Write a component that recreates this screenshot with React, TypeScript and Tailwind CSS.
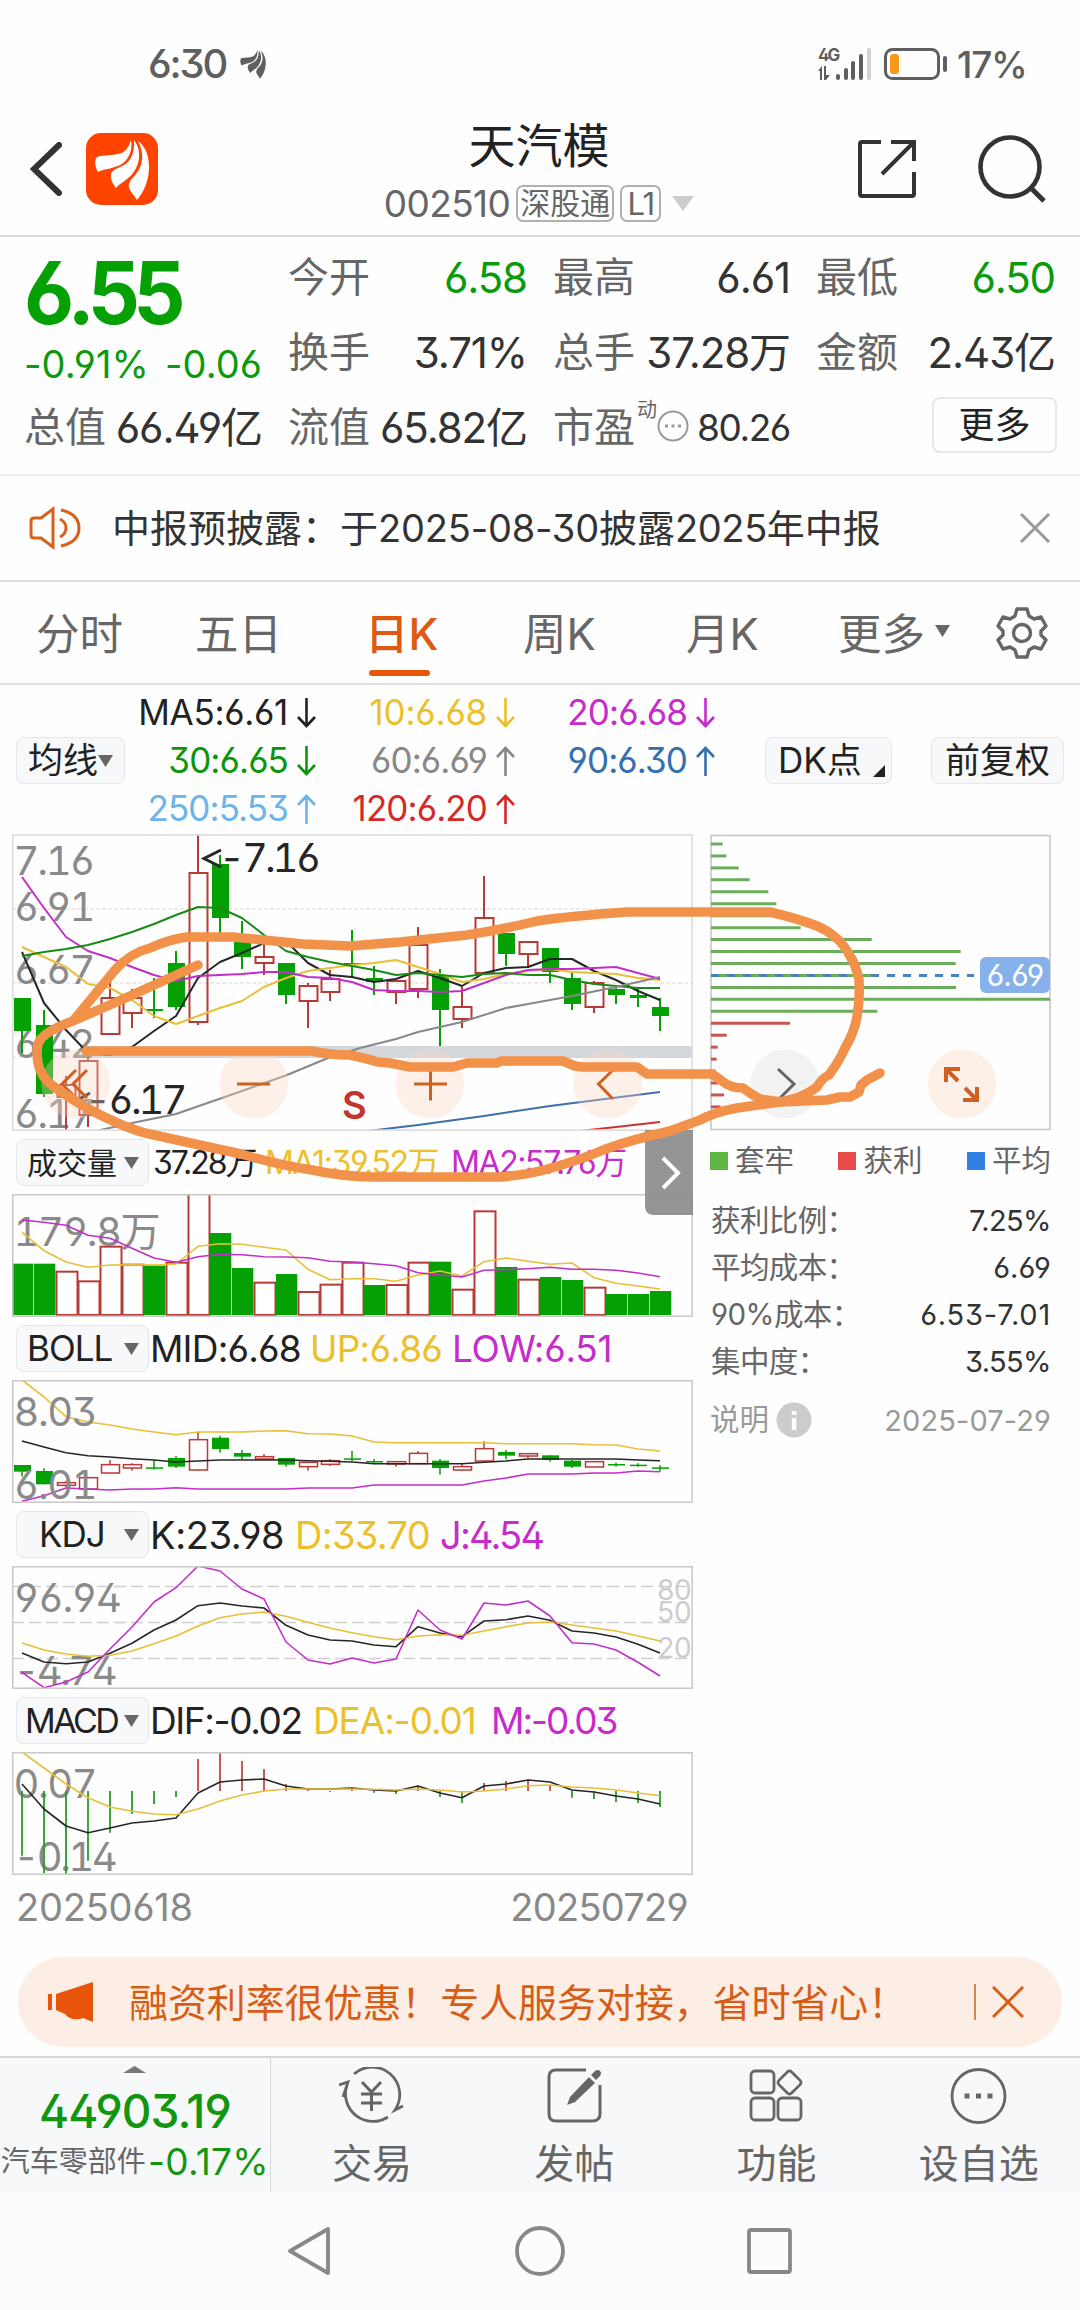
import type { ReactNode } from 'react';

type Candle = [up: number, top: number, bottom: number, high: number, low: number];

const RED = '#b83a36';
const GREEN = '#04a004';
const BLACK = '#262626';
const YELLOW = '#e8bf35';
const MAGENTA = '#c22fc8';

// Series values are stored at 3x density, relative to the base of each pane
const STEP = 22;
const px = (i: number) => 10 + STEP * i;
const toPoints = (values: number[], base: number) =>
  values.map((v, i) => `${px(i)},${((v - base) / 3).toFixed(1)}`).join(' ');

const mainCandles: Candle[] = [
  [0, 998, 1031, 998, 1053], [0, 1025, 1094, 1010, 1097], [1, 1085, 1097, 1076, 1130],
  [1, 1061, 1115, 1057, 1127], [1, 998, 1034, 980, 1034], [1, 998, 1013, 989, 1028],
  [0, 1009, 1011, 978, 1018], [0, 963, 1007, 951, 1010], [1, 873, 1022, 835, 1025],
  [0, 864, 918, 855, 933], [0, 942, 957, 921, 969], [1, 957, 963, 943, 975],
  [0, 963, 995, 963, 1004], [1, 986, 1001, 983, 1028], [1, 979, 992, 970, 1001],
  [0, 963, 965, 930, 977], [0, 978, 982, 966, 995], [1, 981, 992, 981, 1004],
  [1, 945, 989, 927, 998], [0, 976, 1010, 969, 1046], [1, 1007, 1019, 987, 1028],
  [1, 918, 973, 876, 973], [0, 933, 954, 933, 966], [1, 942, 954, 942, 968],
  [0, 948, 972, 948, 983], [0, 978, 1004, 973, 1010], [1, 983, 1007, 981, 1013],
  [0, 989, 995, 985, 1004], [0, 995, 998, 987, 1007], [0, 1007, 1016, 998, 1031],
];

const ma5 = [952, 1003, 1030, 1053, 1055, 1047, 1031, 1016, 978, 962, 953, 943, 941, 963, 975, 977, 982, 979, 971, 978, 986, 973, 968, 967, 959, 959, 971, 980, 991, 1000];
const ma10 = [947, 957, 967, 984, 988, 1000, 1016, 1024, 1016, 1008, 1001, 987, 978, 971, 968, 965, 963, 960, 967, 974, 982, 979, 974, 971, 969, 972, 973, 974, 978, 980];
const ma20 = [877, 908, 937, 951, 958, 967, 975, 981, 976, 975, 974, 972, 972, 977, 978, 982, 990, 991, 991, 992, 991, 983, 975, 970, 969, 969, 968, 967, 973, 979];
const ma30 = [956, 952, 949, 945, 939, 932, 924, 915, 907, 908, 918, 935, 951, 957, 962, 966, 970, 975, 973, 975, 977, 974, 973, 975, 975, 980, 984, 986, 988, 988];

const volumes: [number, number][] = [
  [0, 401], [0, 401], [1, 422], [1, 451], [1, 347], [1, 401], [0, 407], [1, 395], [1, 180], [0, 309],
  [0, 414], [1, 455], [0, 432], [1, 483], [1, 461], [1, 395], [0, 465], [1, 462], [1, 395], [0, 395],
  [1, 476], [1, 241], [0, 411], [1, 446], [0, 441], [0, 450], [1, 470], [0, 492], [0, 492], [0, 483],
];
const volMa1 = [307, 362, 396, 412, 405, 404, 405, 402, 349, 341, 343, 352, 360, 418, 449, 446, 446, 454, 435, 423, 438, 395, 384, 394, 403, 399, 443, 460, 468, 477];
const volMa2 = [270, 277, 286, 316, 325, 355, 384, 397, 380, 373, 374, 380, 381, 383, 394, 396, 401, 407, 428, 435, 441, 421, 419, 416, 412, 418, 418, 421, 429, 440];

const bollCandles: Candle[] = [
  [0, 1005, 1025, 1005, 1040], [0, 1023, 1063, 1015, 1063], [1, 1058, 1066, 1052, 1072], [1, 1043, 1077, 1043, 1077],
  [1, 1004, 1029, 990, 1029], [1, 1004, 1014, 1000, 1022], [0, 1012, 1015, 990, 1019], [0, 984, 1010, 978, 1014],
  [1, 929, 1020, 906, 1022], [0, 923, 957, 917, 968], [0, 969, 980, 960, 988], [1, 980, 987, 972, 990],
  [0, 984, 1004, 984, 1010], [1, 997, 1010, 997, 1022], [1, 992, 1003, 987, 1008], [0, 985, 988, 963, 993],
  [0, 993, 996, 987, 1002], [1, 995, 1002, 995, 1010], [1, 970, 1001, 963, 1001], [0, 992, 1014, 987, 1034],
  [1, 1010, 1020, 1000, 1022], [1, 956, 993, 934, 993], [0, 966, 977, 960, 988], [1, 971, 978, 971, 984],
  [0, 976, 990, 976, 995], [0, 992, 1010, 990, 1014], [1, 995, 1011, 995, 1011], [0, 1002, 1004, 998, 1010],
  [0, 1004, 1005, 1000, 1010], [0, 1012, 1016, 1006, 1025],
];
const bollUp = [750, 801, 860, 876, 885, 897, 906, 914, 906, 906, 906, 903, 902, 911, 912, 918, 936, 938, 938, 938, 938, 938, 941, 941, 941, 941, 944, 945, 957, 963];
const bollMid = [933, 951, 968, 977, 981, 986, 990, 996, 993, 990, 990, 990, 990, 992, 994, 996, 1001, 1001, 1001, 1001, 1001, 997, 993, 987, 987, 987, 987, 987, 990, 992];
const bollLow = [1114, 1097, 1074, 1077, 1080, 1077, 1077, 1073, 1077, 1077, 1077, 1077, 1077, 1074, 1074, 1074, 1065, 1065, 1065, 1065, 1065, 1053, 1044, 1032, 1032, 1032, 1029, 1029, 1023, 1025];

const kdjK = [459, 486, 491, 486, 460, 430, 390, 360, 317, 309, 318, 324, 376, 405, 420, 423, 435, 440, 380, 399, 410, 363, 359, 348, 361, 393, 399, 411, 433, 459];
const kdjD = [429, 450, 462, 469, 466, 453, 431, 408, 378, 353, 342, 336, 349, 367, 384, 398, 410, 419, 408, 404, 406, 393, 380, 369, 366, 375, 384, 393, 408, 423];
const kdjJ = [517, 563, 546, 516, 447, 381, 306, 263, 198, 213, 267, 297, 426, 480, 492, 474, 489, 477, 330, 390, 417, 309, 315, 303, 348, 428, 432, 450, 487, 528];

const macdBars = [1067, 1120, 1122, 1082, 998, 942, 912, 891, 777, 756, 783, 807, 852, 868, 876, 868, 878, 882, 860, 891, 909, 849, 843, 840, 857, 893, 897, 906, 909, 921];
const macdDif = [852, 927, 978, 998, 984, 969, 963, 954, 879, 846, 840, 837, 858, 867, 867, 864, 870, 873, 858, 879, 893, 858, 852, 840, 846, 870, 876, 888, 897, 912];
const macdDea = [756, 804, 852, 893, 921, 934, 942, 944, 927, 903, 885, 873, 867, 867, 867, 867, 868, 870, 867, 870, 876, 873, 867, 857, 855, 861, 864, 870, 879, 887];

// Right ends of the chip distribution lines
const chips = [68, 79, 116, 149, 205, 229, 262, 302, 515, 782, 767, 515, 768, 1050, 532, 270, 80, 53, 50, 47, 55, 72, 62];

const Line = ({ points, color, width = 1.6 }: { points: string; color: string; width?: number }) => (
  <polyline points={points} fill="none" stroke={color} strokeWidth={width} strokeLinejoin="round" />
);

const Candles = ({ data, y, stroke }: { data: Candle[]; y: (v: number) => number; stroke: number }) => (
  <>
    {data.map(([up, top, bottom, high, low], i) => {
      const x = px(i);
      const t = y(top);
      const h = Math.max(y(bottom) - t, 1.5);
      return up ? (
        <g key={i} stroke={RED} strokeWidth={stroke}>
          <path d={`M${x} ${y(high)}V${t}M${x} ${t + h}V${Math.max(y(low), t + h)}`} />
          <rect x={x - 8.5} y={t} width={18} height={h} fill="none" />
        </g>
      ) : (
        <g key={i} fill={GREEN}>
          <rect x={x - 8} y={t} width={17} height={h} />
          <rect x={x - stroke / 2} y={y(high)} width={stroke} height={y(low) - y(high)} />
        </g>
      );
    })}
  </>
);

const AxisLabel = ({ y, size = 40, spacing = -1.5, children }: { y: number; size?: number; spacing?: number; children: ReactNode }) => (
  <text x={1.5} y={y} fontSize={size} fill="#8a8a8a" letterSpacing={spacing}>{children}</text>
);

const Pane = ({ children }: { children: ReactNode }) => (
  <svg className="ml-3 block h-[123px] w-[681px] overflow-hidden [font-feature-settings:'ss01','tnum']" viewBox="0 0 681 123">
    {children}
    <rect x="0.8" y="0.8" width="679.4" height="121.4" fill="none" stroke="#c8c8c8" strokeWidth="1.5" />
  </svg>
);

const PaneHeader = ({ name, nameClass, children }: { name: string; nameClass: string; children: ReactNode }) => (
  <div className="flex h-[63px] items-center pl-4">
    <div className="flex h-[47px] w-[133px] shrink-0 items-center justify-between rounded-lg border border-[#e4e6e9] bg-[#f7f8fa] pr-[9px]">
      <span className={nameClass}>{name}</span>
      <Triangle />
    </div>
    {children}
  </div>
);

const Triangle = () => (
  <svg className="h-3 w-[15px] shrink-0" viewBox="0 0 15 12"><path d="M0 0H15L7.5 12Z" fill="#666" /></svg>
);

const Feather = ({ className }: { className: string }) => (
  <svg className={className} viewBox="0 0 72 72" fill="currentColor">
    <path d="M45 7C43 14 39 20 32 21C24 23 14 22 11 24C8 27 9 34 12 39C17 36 26 36 34 32C42 28 47 18 45 7Z" />
    <path d="M48 7C49 19 45 29 36 33C31 36 25 37 25 42C24 46 27 51 30 55C34 50 42 47 47 40C54 31 56 17 48 7Z" />
    <path d="M52 8C58 19 58 31 50 41C46 46 42 49 43 54C44 59 48 62 51 67C58 59 63 47 63 34C63 22 59 13 52 8Z" />
  </svg>
);

const MaItem = ({ text, up, color }: { text: string; up?: boolean; color: string }) => (
  <div className={`flex h-12 items-center justify-end gap-[9px] ${color}`}>
    <span>{text}</span>
    <svg className="h-[30px] w-[19px]" viewBox="0 0 19 30" fill="none" stroke="currentColor" strokeWidth="2.6">
      <path d={up ? 'M9.5 30V2M1 11L9.5 2L18 11' : 'M9.5 0V28M1 19L9.5 28L18 19'} />
    </svg>
  </div>
);

const StatusBar = () => (
  <div className="flex h-[126px] items-center pt-0.5 pr-[53px] pl-[148px] text-[#5f5f5f]">
    <span className="text-[40px] font-medium tracking-[-2.2px]">6:30</span>
    <Feather className="ml-2.5 h-[34px] w-[34px]" />
    <svg className="ml-auto h-9 w-[54px]" viewBox="0 0 54 36" fill="currentColor">
      <text x="0" y="15" fontSize="17" fontWeight="700" letterSpacing="-2">4G</text>
      <path d="M0 25L4 20V34H2V25ZM6 20H8V29L12 29L8 34H6Z" />
      <rect x="18" y="28" width="4" height="6" rx="2" />
      <rect x="26" y="22" width="4" height="12" rx="2" />
      <rect x="33" y="15" width="4" height="19" rx="2" />
      <rect x="41" y="8" width="4" height="26" rx="2" />
      <rect x="49" y="2" width="4" height="32" rx="2" fill="#d2d2d2" />
    </svg>
    <svg className="ml-3 h-8 w-[63px]" viewBox="0 0 63 32">
      <rect x="1.5" y="1.5" width="53" height="29" rx="7" fill="none" stroke="currentColor" strokeWidth="3" />
      <rect x="6" y="6" width="9" height="20" rx="3" fill="#f79a1c" />
      <rect x="59" y="8" width="4" height="16" rx="2" fill="currentColor" />
    </svg>
    <span className="ml-2.5 w-[70px] text-[37px] font-medium tracking-[-1.2px]">17%</span>
  </div>
);

const Header = () => (
  <div className="flex h-[111px] items-center border-b-2 border-[#d9d9d9] pr-[33px] pb-[23px] pl-[30px]">
    <svg className="h-[54px] w-8 shrink-0" viewBox="0 0 32 54" fill="none" stroke="#333" strokeWidth="6" strokeLinecap="round">
      <path d="M29 3L4 27L29 51" />
    </svg>
    <div className="ml-6 h-[72px] w-[72px] shrink-0 rounded-[15px] bg-[#ff4300] text-white">
      <Feather className="h-[72px] w-[72px]" />
    </div>
    <div className="flex grow flex-col items-center pt-[7px] pl-[97px]">
      <div className="text-[47px] leading-[52px] text-[#222]">天汽模</div>
      <div className="mt-[9px] flex h-11 items-center text-[#666]">
        <span className="text-[37px] tracking-[-0.6px]">002510</span>
        <span className="ml-1.5 flex h-[37px] items-center rounded-[7px] border-2 border-[#b0b0b0] px-0.5 text-[30px]">深股通</span>
        <span className="ml-1.5 flex h-[37px] w-[41px] items-center justify-center rounded-[7px] border-2 border-[#b0b0b0] text-[31px] tracking-[-1px]">L1</span>
        <svg className="ml-[11px] h-[15px] w-[22px]" viewBox="0 0 22 15"><path d="M0 0H22L11 15Z" fill="#ccc" /></svg>
      </div>
    </div>
    <svg className="ml-[34px] h-[60px] w-[60px] shrink-0" viewBox="0 0 60 60" fill="none" stroke="#333" strokeWidth="4">
      <path d="M24 3H5Q3 3 3 5V55Q3 57 5 57H55Q57 57 57 55V33M34 3H57V22M57 3L25 35" />
    </svg>
    <svg className="ml-[60px] h-[70px] w-[70px] shrink-0" viewBox="0 0 70 70" fill="none" stroke="#333" strokeWidth="4.6">
      <circle cx="33" cy="33" r="29.5" />
      <path d="M54 54L67 67" strokeWidth="5" />
    </svg>
  </div>
);

const Quote = ({ label, value, color = 'text-[#333]' }: { label: string; value: string; color?: string }) => (
  <div className="flex h-[75px] items-center justify-between">
    <span className="text-[41px] text-[#666]">{label}</span>
    <span className={`text-[42px] tracking-[-1.1px] whitespace-nowrap ${color}`}>{value}</span>
  </div>
);

const Quotes = () => (
  <div className="grid h-[239px] grid-cols-[238px_239px_237px_239px] content-start gap-x-[26px] border-b-2 border-[#eee] pt-[3px] pr-[25px] pl-6">
    <div className="row-span-2 text-[#0b9a0b]">
      <div className="mt-2.5 h-[86px] origin-left scale-x-[0.95] text-[86px] leading-[86px] font-bold tracking-[-7px] text-[#04a004]">6.55</div>
      <div className="flex justify-between pt-[9px] text-[38px] tracking-[0.1px] whitespace-nowrap">
        <span>-0.91%</span>
        <span>-0.06</span>
      </div>
    </div>
    <Quote label="今开" value="6.58" color="text-[#0b9a0b]" />
    <Quote label="最高" value="6.61" />
    <Quote label="最低" value="6.50" color="text-[#0b9a0b]" />
    <Quote label="换手" value="3.71%" />
    <Quote label="总手" value="37.28万" />
    <Quote label="金额" value="2.43亿" />
    <Quote label="总值" value="66.49亿" />
    <Quote label="流值" value="65.82亿" />
    <div className="flex h-[75px] items-center">
      <span className="text-[41px] text-[#666]">市盈</span>
      <span className="mb-9 ml-0.5 text-[20px] text-[#666]">动</span>
      <svg className="mb-1 h-8 w-8" viewBox="0 0 32 32" fill="none" stroke="#999" strokeWidth="2">
        <circle cx="16" cy="16" r="14.5" />
        <path d="M8 16h3M14.500 16h3M21 16h3" strokeWidth="3" />
      </svg>
      <span className="ml-auto text-[37px] tracking-[-1.4px] text-[#333]">80.26</span>
    </div>
    <div className="flex h-[75px] items-center justify-end">
      <div className="-mr-0.5 mb-1.5 flex h-14 w-[125px] items-center justify-center rounded-lg border-2 border-[#e6e8ea] text-[36px] text-[#222]">更多</div>
    </div>
  </div>
);

const Notice = () => (
  <div className="flex h-[106px] items-center border-b-2 border-[#ddd] pr-[30px] pl-[29px]">
    <svg className="h-11 w-[52px]" viewBox="0 0 52 44" fill="none" stroke="#d8601c" strokeWidth="3">
      <path d="M24 3L12 12H5Q2 12 2 15V29Q2 32 5 32H12L24 41ZM31 13Q37 16 37 22T31 31M32 4Q50 8 50 22T32 40" />
    </svg>
    <span className="ml-[31px] text-[38px] whitespace-nowrap text-[#333]">
      中报预披露：于<span className="tracking-[-0.2px]">2025-08-30</span>披露<span className="tracking-[-0.4px]">2025</span>年中报
    </span>
    <svg className="ml-auto h-[30px] w-[30px]" viewBox="0 0 30 30" stroke="#999" strokeWidth="3"><path d="M1 1L29 29M29 1L1 29" /></svg>
  </div>
);

const tabs = [
  { name: '分时', cls: 'ml-9 w-[159px]' },
  { name: '五日', cls: 'w-[170px]' },
  { name: '日K', cls: 'w-[158px]', active: true },
  { name: '周K', cls: 'w-[163px]' },
  { name: '月K', cls: 'w-[152px]' },
  { name: '更多', cls: '' },
];

const Tabs = () => (
  <div className="flex h-[103px] items-center border-b-2 border-[#ddd] text-[43.500px] text-[#666]">
    {tabs.map((t) => (
      <div key={t.name} className={`relative pt-1 ${t.cls}`}>
        <span className={t.active ? 'font-medium text-[#de5a12]' : ''}>{t.name}</span>
        {t.active && <div className="absolute top-[61px] left-1 h-1.5 w-[61px] rounded-sm bg-[#e8560a]" />}
      </div>
    ))}
    <div className="mb-1 ml-2.5"><Triangle /></div>
    <svg className="ml-[45px] h-[54px] w-[54px]" viewBox="0 0 54 54" fill="none" stroke="#666" strokeWidth="3.4" strokeLinejoin="round">
      <path d="M22 3H32L34 10L39 13L46 11L51 20L46 25V29L51 34L46 43L39 41L34 44L32 51H22L20 44L15 41L8 43L3 34L8 29V25L3 20L8 11L15 13L20 10Z" />
      <circle cx="27" cy="27" r="8.500" />
    </svg>
  </div>
);

const MaHeader = () => (
  <div className="flex h-[149px] items-center pt-0.5 pl-4 text-[35px] text-[#222]">
    <div className="flex h-[47px] w-[109px] items-center justify-center rounded-lg border border-[#e4e6e9] bg-[#f7f8fa]">
      均线<Triangle />
    </div>
    <div className="grid grid-cols-[191px_199px_200px] tracking-[-0.9px]">
      <MaItem text="MA5:6.61" color="text-[#222] tracking-[-0.3px]" />
      <MaItem text="10:6.68" color="text-[#ecc02a] tracking-[-0.2px]" />
      <MaItem text="20:6.68" color="text-[#c62bcb]" />
      <MaItem text="30:6.65" color="text-[#0b960b]" />
      <MaItem text="60:6.69" up color="text-[#888]" />
      <MaItem text="90:6.30" up color="text-[#356fb0]" />
      <MaItem text="250:5.53" up color="text-[#6cb4ea]" />
      <MaItem text="120:6.20" up color="text-[#d32a28]" />
    </div>
    <div className="ml-[50px] flex h-[47px] w-[127px] items-center justify-between rounded-lg border border-[#e4e6e9] bg-[#f7f8fa] pr-1.5 pl-3">
      <span>DK点</span>
      <svg className="mt-5 h-3 w-3" viewBox="0 0 12 12"><path d="M12 0V12H0Z" fill="#222" /></svg>
    </div>
    <div className="ml-[39px] flex h-[47px] w-[133px] items-center justify-center rounded-lg border border-[#e4e6e9] bg-[#f7f8fa]">前复权</div>
  </div>
);

const MainChart = () => {
  const pts = (v: number[]) => v.map((y, i) => `${px(i)},${y - 834}`).join(' ');
  return (
    <svg className="ml-3 block h-[297px] w-[681px] overflow-hidden [font-feature-settings:'ss01','tnum']" viewBox="0 0 681 297">
      <path d="M0 75H680M0 149H680M0 223H680" stroke="#ececec" strokeWidth="2" strokeDasharray="4 2" />
      <rect x="72" y="212" width="608" height="12" fill="#d4d8dd" />
      <AxisLabel y={41} spacing={-2.2}>7.16</AxisLabel>
      <AxisLabel y={87} spacing={-2.2}>6.91</AxisLabel>
      <AxisLabel y={150} spacing={-2.2}>6.67</AxisLabel>
      <AxisLabel y={224} spacing={-2.2}>6.42</AxisLabel>
      <AxisLabel y={294} spacing={-2.2}>6.17</AxisLabel>
      <Candles data={mainCandles} y={(v) => v - 834} stroke={2} />
      <Line points={pts(ma5)} color={BLACK} width={2} />
      <Line points={pts(ma10)} color={YELLOW} width={2} />
      <Line points={pts(ma20)} color={MAGENTA} width={2} />
      <Line points={pts(ma30)} color="#178a17" width={2} />
      <Line points="84,297 120,289 164,280 230,257 275,241 316,224 348,214 384,205 406,198 450,188 494,174 516,170 560,162 604,153 648,143" color="#888" width={2} />
      <Line points="356,297 406,291 472,282 538,272 648,258" color="#3d70a8" width={2} />
      <Line points="568,297 604,293 648,288" color="#c83434" width={2} />
      <g fill={BLACK} fontSize={40} letterSpacing={-3}>
        <path d="M209 16L192 24.500L209 33M78 259L63 267.500L78 276" fill="none" stroke={BLACK} strokeWidth="3" />
        <text x="207" y="38">-7.16</text>
        <text x="73" y="280">-6.17</text>
      </g>
      <text x="330" y="285" fontSize="38" fontWeight="600" fill="#c23430">S</text>
      <rect x="0.8" y="0.8" width="679.4" height="295.4" fill="none" stroke="#dedede" strokeWidth="1.8" />
    </svg>
  );
};

const Volume = () => (
  <Pane>
    {volumes.map(([up, top], i) => {
      const y = (top - 192) / 3;
      return up ? (
        <rect key={i} x={i * 22 + 0.5} y={y + 1} width={21} height={120 - y} fill="#fff" stroke={RED} strokeWidth="2" />
      ) : (
        <rect key={i} x={i * 22} y={y} width={21.3} height={121 - y} fill={GREEN} />
      );
    })}
    <AxisLabel y={52}>179.8万</AxisLabel>
    <Line points={toPoints(volMa1, 192)} color={YELLOW} />
    <Line points={toPoints(volMa2, 192)} color={MAGENTA} />
  </Pane>
);

const Boll = () => (
  <Pane>
    <Candles data={bollCandles} y={(v) => (v - 750) / 3} stroke={1.5} />
    <Line points={toPoints(bollUp, 750)} color={YELLOW} />
    <Line points={toPoints(bollMid, 750)} color={BLACK} />
    <Line points={toPoints(bollLow, 750)} color={MAGENTA} />
    <AxisLabel y={46}>8.03</AxisLabel>
    <AxisLabel y={119}>6.01</AxisLabel>
  </Pane>
);

const Kdj = () => (
  <Pane>
    <path d="M0 20.500H680M0 56.500H680M0 92.500H680" stroke="#d0d0d0" strokeWidth="1.3" strokeDasharray="12 5" />
    <g fontSize="28" fill="#ccc" letterSpacing="-1" textAnchor="end">
      <text x="679" y="34">80</text>
      <text x="679" y="56">50</text>
      <text x="679" y="92">20</text>
    </g>
    <AxisLabel y={46}>96.94</AxisLabel>
    <AxisLabel y={119} spacing={-2.6}>-4.74</AxisLabel>
    <Line points={toPoints(kdjK, 198)} color={BLACK} />
    <Line points={toPoints(kdjD, 198)} color={YELLOW} />
    <Line points={toPoints(kdjJ, 198)} color={MAGENTA} />
  </Pane>
);

const Macd = () => (
  <Pane>
    <AxisLabel y={46}>0.07</AxisLabel>
    <AxisLabel y={119} spacing={-2.6}>-0.14</AxisLabel>
    {macdBars.map((v, i) => (
      <path key={i} d={`M${px(i)} 39V${(v - 756) / 3}`} stroke={v < 873 ? '#c04a48' : '#2a9c2a'} strokeWidth="1.8" />
    ))}
    <Line points={toPoints(macdDif, 756)} color={BLACK} />
    <Line points={toPoints(macdDea, 756)} color={YELLOW} />
  </Pane>
);

const LeftCharts = () => (
  <div className="w-[693px] shrink-0">
    <MainChart />
    <PaneHeader name="成交量" nameClass="pl-2.5 text-[30px] text-[#222]">
      <div className="ml-1 flex gap-[9px] text-[32px] tracking-[-1.4px] whitespace-nowrap">
        <span className="w-[103px] tracking-[-2px] text-[#222]">37.28万</span>
        <span className="w-[177px] text-[#ecc02a]">MA1:39.52万</span>
        <span className="text-[#c62bcb]">MA2:57.76万</span>
      </div>
    </PaneHeader>
    <Volume />
    <PaneHeader name="BOLL" nameClass="pl-2.5 text-[35px] tracking-[-1px] text-[#222]">
      <div className="ml-px flex text-[37px] tracking-[-0.8px] whitespace-nowrap">
        <span className="w-40 text-[#222]">MID:6.68</span>
        <span className="w-[142px] text-[#ecc02a]">UP:6.86</span>
        <span className="tracking-[-0.3px] text-[#c62bcb]">LOW:6.51</span>
      </div>
    </PaneHeader>
    <Boll />
    <PaneHeader name="KDJ" nameClass="pl-[22px] text-[35px] tracking-[-1px] text-[#222]">
      <div className="ml-px flex text-[38px] tracking-[-0.4px] whitespace-nowrap">
        <span className="w-[145px] text-[#222]">K:23.98</span>
        <span className="w-[145px] tracking-[-0.7px] text-[#ecc02a]">D:33.70</span>
        <span className="tracking-[-1.8px] text-[#c62bcb]">J:4.54</span>
      </div>
    </PaneHeader>
    <Kdj />
    <PaneHeader name="MACD" nameClass="pl-2 text-[34px] tracking-[-2.5px] text-[#222]">
      <div className="ml-px flex text-[37px] tracking-[-1.1px] whitespace-nowrap">
        <span className="w-[163px] tracking-[-1.4px] text-[#222]">DIF:-0.02</span>
        <span className="w-[178px] text-[#ecc02a]">DEA:-0.01</span>
        <span className="tracking-[-2px] text-[#c62bcb]">M:-0.03</span>
      </div>
    </PaneHeader>
    <Macd />
    <div className="flex justify-between pt-[13px] pr-[5px] pl-4 text-[38px] text-[#888]">
      <span className="tracking-[-0.2px]">20250618</span>
      <span className="tracking-[-0.7px]">20250729</span>
    </div>
  </div>
);

const legend = [
  { name: '套牢', color: 'bg-[#5cb544]' },
  { name: '获利', color: 'bg-[#e84a4a]' },
  { name: '平均', color: 'bg-[#3280e4]' },
];

const costs = [
  { label: '获利比例：', value: '7.25%', cls: 'tracking-[-0.6px]' },
  { label: '平均成本：', value: '6.69', cls: '' },
  { label: '90%成本：', value: '6.53-7.01', cls: 'tracking-[0.8px]' },
  { label: '集中度：', value: '3.55%', cls: 'tracking-[-0.6px]' },
];

const ChipPanel = () => (
  <div className="ml-[17px] w-[341px]">
    <svg className="block h-[297px] w-[341px]" viewBox="0 0 341 297">
      <rect x="1" y="1.500" width="339" height="294" fill="none" stroke="#c8c8c8" strokeWidth="1.6" />
      {chips.map((end, i) => (
        <path key={i} d={`M1 ${10 + i * 11.95}H${end / 3 - 10}`} stroke={i < 15 ? '#6bad5a' : '#c95550'} strokeWidth="3" />
      ))}
      <path d="M1 141.500H264" stroke="#4a80c0" strokeWidth="3" strokeDasharray="8 8" />
      <rect x="270" y="123" width="70" height="36" rx="6" fill="#86b1ea" />
      <text x="305" y="152" fontSize="30" fill="#fff" textAnchor="middle" letterSpacing="-0.8">6.69</text>
    </svg>
    <div className="mt-2 flex h-11 items-center justify-between text-[29.5px] text-[#666]">
      {legend.map((l) => (
        <div key={l.name} className="flex items-center gap-[7px]">
          <div className={`h-[18px] w-[18px] ${l.color}`} />
          {l.name}
        </div>
      ))}
    </div>
    <div className="mt-3.5">
      {costs.map((c) => (
        <div key={c.label} className="flex h-[47px] items-center justify-between text-[29.5px]">
          <span className="pl-px tracking-[-0.6px] text-[#666]">{c.label}</span>
          <span className={`text-[29px] text-[#333] ${c.cls}`}>{c.value}</span>
        </div>
      ))}
    </div>
    <div className="mt-2.5 flex h-[50px] items-center text-[29.5px] text-[#999]">
      <span>说明</span>
      <svg className="ml-[7px] h-9 w-9" viewBox="0 0 36 36">
        <circle cx="18" cy="18" r="17.500" fill="#ccc" />
        <path d="M18 9V13M18 16V28" stroke="#fff" strokeWidth="4.500" />
      </svg>
      <span className="ml-auto text-[29px] tracking-[0.1px]">2025-07-29</span>
    </div>
  </div>
);

const ChartTools = () => (
  <svg className="absolute top-[365px] left-0 h-[68px] w-[1080px]" viewBox="0 0 1080 68" fill="none" stroke="#cf601f" strokeWidth="3">
    <g fill="#fbd5c2" fillOpacity="0.34" stroke="none">
      <circle cx="76" cy="34" r="34.500" />
      <circle cx="254" cy="34" r="34.500" />
      <circle cx="430" cy="34" r="34.500" />
      <circle cx="608" cy="34" r="34.500" />
      <circle cx="785" cy="34" r="34.500" fill="#ddd" />
      <circle cx="962" cy="34" r="34.500" />
    </g>
    <path d="M76 20L62 34L76 48M87 20L73 34L87 48M237 34H270M414 34H447M430.500 17.500V50.500M613 20L598.500 34L613 49" />
    <path d="M778 19L794 34L778 50" stroke="#666" />
    <path d="M946 32V19H960M947 20L958 31M977 37V50H963M976 49L965 38" strokeWidth="4" />
  </svg>
);

// Hand drawn marks over the K-line area
const Scribble = () => (
  <svg className="absolute top-[149px] left-0 h-[350px] w-[900px]" viewBox="0 834 900 350" fill="none" stroke="#f2924a" strokeWidth="9.500" strokeLinecap="round" strokeLinejoin="round">
    <path d="M198 965L130 996L73 1021Q42 1032 38 1044Q34 1068 48 1082Q60 1092 85 1107Q120 1126 145 1133L241 1154Q280 1165 312 1170Q340 1176 370 1177H500Q530 1175 558 1166Q585 1158 603 1150Q630 1140 670 1131L700 1120Q715 1112 737 1108L773 1103Q800 1100 817 1087Q822 1078 829 1075Q840 1060 845 1048Q854 1033 857 1017Q860 1000 859 980Q856 965 850 956Q843 943 835 937Q827 930 817 926Q796 918 770 912H627Q570 916 537 921Q500 930 467 935L400 942L350 946L303 944L233 937H187Q170 939 150 948Q130 953 115 970L73 1021" />
    <path d="M86 1051H312Q330 1055 350 1055Q365 1058 378 1062L390 1063L410 1067H453L467 1063H497L501 1061H563L575 1066L583 1067H637L647 1074H712L722 1081Q730 1088 743 1088Q752 1095 760 1099L780 1102L827 1100L840 1097H850L859 1092L861 1085L867 1080L880 1073" />
  </svg>
);

const ChartArea = () => (
  <div className="relative h-[1272px]">
    <MaHeader />
    <div className="flex">
      <LeftCharts />
      <ChipPanel />
    </div>
    <div className="absolute top-[445px] left-[645px] flex h-[85px] w-12 items-center justify-center rounded-bl-lg bg-[#8a8a8a]/90 pl-1">
      <svg className="h-[34px] w-5" viewBox="0 0 20 34" fill="none" stroke="#fff" strokeWidth="4"><path d="M2 2L17 17L2 32" /></svg>
    </div>
    <ChartTools />
    <Scribble />
  </div>
);

const Banner = () => (
  <div className="mx-[18px] flex h-[90px] items-center rounded-[45px] bg-[#fceee4] pr-[38px] pl-[30px]">
    <svg className="h-10 w-[46px]" viewBox="0 0 46 40" fill="#e8540a">
      <path d="M0 12H4V28H0ZM8 12L45 0V40L35 36Q31 38 25 37Q20 36 17 32L8 28Z" />
    </svg>
    <span className="ml-[35px] text-[39px] tracking-[-0.1px] text-[#d75d16]">融资利率很优惠！专人服务对接，省时省心！</span>
    <div className="ml-auto h-9 w-0.5 bg-[#dd8455]" />
    <svg className="ml-4 h-8 w-8" viewBox="0 0 32 32" stroke="#d75d16" strokeWidth="3"><path d="M1 1L31 31M31 1L1 31" /></svg>
  </div>
);

const actions = [
  {
    name: '交易',
    icon: (
      <>
        <path d="M15 7A27.500 27.500 0 0 1 56 43L64 39M8 18A27.500 27.500 0 0 0 49 50M0 18L9 15L4 30" strokeWidth="2.8" />
        <path d="M23 15L32.500 25L42 15M22 27H43M22 36H43M32.500 25V44" strokeWidth="3" />
      </>
    ),
  },
  {
    name: '发帖',
    icon: (
      <>
        <path d="M44 3H14Q7 3 7 10V47Q7 54 14 54H50Q58 54 58 47V18" strokeWidth="3" />
        <path d="M47 10L53 16L33 35L25 38L28 30ZM49 8L53 4Q56 2 58 4T58 9L54 13Z" fill="#666" stroke="none" />
      </>
    ),
  },
  {
    name: '功能',
    icon: (
      <>
        <rect x="7" y="4" width="23" height="22" rx="4" strokeWidth="2.8" />
        <rect x="7" y="31" width="23" height="22" rx="4" strokeWidth="2.8" />
        <rect x="34" y="31" width="23" height="22" rx="4" strokeWidth="2.8" />
        <rect x="36.500" y="6.500" width="18" height="18" rx="3" strokeWidth="2.8" transform="rotate(45 45.500 15.500)" />
      </>
    ),
  },
  {
    name: '设自选',
    icon: (
      <>
        <circle cx="32.500" cy="29" r="26.500" strokeWidth="2.8" />
        <path d="M18.500 29H23.500M30 29H35M41.500 29H46.500" strokeWidth="5" />
      </>
    ),
  },
];

const BottomBar = () => (
  <div className="flex h-[136px] border-t-2 border-[#d4d7da] bg-[#f7f8fa] text-[#666]">
    <div className="flex w-[271px] flex-col items-center border-r border-[#d4d7da] pt-2">
      <svg className="h-[7px] w-[23px]" viewBox="0 0 23 7"><path d="M0 7H23L11.500 0Z" fill="#777" /></svg>
      <div className="mt-[14px] h-12 text-[46px] leading-[48px] font-medium tracking-[-1px] text-[#12960f]">44903.19</div>
      <div className="mt-1 flex h-11 items-center gap-0.5 whitespace-nowrap">
        <span className="text-[29px]">汽车零部件</span>
        <span className="text-[37px] tracking-[0.3px] text-[#12960f]">-0.17%</span>
      </div>
    </div>
    {actions.map((a) => (
      <div key={a.name} className="flex w-[202.500px] flex-col items-center pt-[9px]">
        <svg className="h-[58px] w-[65px]" viewBox="0 0 65 58" fill="none" stroke="#666">{a.icon}</svg>
        <span className="mt-[14px] text-[40px] leading-[50px]">{a.name}</span>
      </div>
    ))}
  </div>
);

const SystemNav = () => (
  <div className="flex h-[118px] items-center bg-[#fcfcfc] pl-[287px]">
    <svg className="h-[50px] w-[506px]" viewBox="0 0 506 50" fill="none" stroke="#888" strokeWidth="3.8" strokeLinejoin="round">
      <path d="M41 3V47L3 25Z" />
      <circle cx="253" cy="25" r="23" />
      <rect x="462" y="4" width="41" height="42" rx="2" />
    </svg>
  </div>
);

const App = () => {
  return (
    <div className="h-[2310px] w-[1080px] overflow-hidden bg-[#fefefe] font-['Inter','Noto_Sans_CJK_SC',sans-serif] leading-none [font-feature-settings:'ss01']">
      <StatusBar />
      <Header />
      <Quotes />
      <Notice />
      <Tabs />
      <ChartArea />
      <Banner />
      <div className="h-[9px]" />
      <BottomBar />
      <SystemNav />
    </div>
  );
};

export default App;
